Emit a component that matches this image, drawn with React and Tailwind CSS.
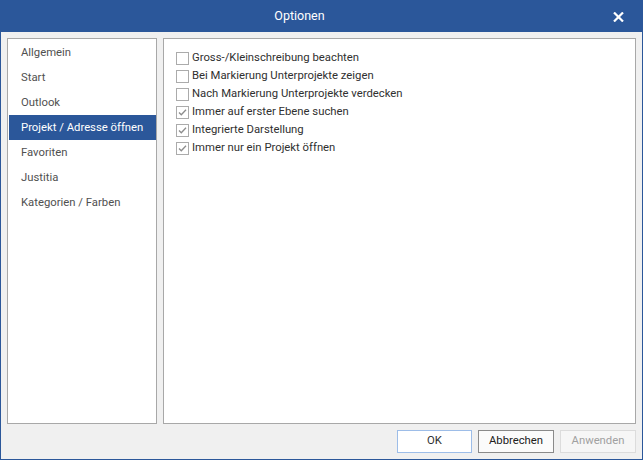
import React from "react";

const nav = [
  "Allgemein",
  "Start",
  "Outlook",
  "Projekt / Adresse öffnen",
  "Favoriten",
  "Justitia",
  "Kategorien / Farben",
];

const opts = [
  ["Gross-/Kleinschreibung beachten", false],
  ["Bei Markierung Unterprojekte zeigen", false],
  ["Nach Markierung Unterprojekte verdecken", false],
  ["Immer auf erster Ebene suchen", true],
  ["Integrierte Darstellung", true],
  ["Immer nur ein Projekt öffnen", true],
];

function Box({ checked }) {
  return (
    <div className="w-[13px] h-[13px] border border-[#ababab] bg-white flex items-center justify-center shrink-0">
      {checked && (
        <svg width="11" height="11" viewBox="0 0 11 11">
          <path d="M2 5.5 L4.3 7.8 L9 2.8" fill="none" stroke="#8c8c8c" strokeWidth="1.3" />
        </svg>
      )}
    </div>
  );
}

export default function App() {
  return (
    <div
      className="w-[643px] h-[460px] flex flex-col bg-[#f0f0f0] border-x border-b border-[#2b579a] text-[11.3px]"
      style={{ fontFamily: "Roboto, 'Liberation Sans', sans-serif" }}
    >
      <div className="h-[32px] -mx-px bg-[#2b579a] flex items-center shrink-0 relative">
        <div className="flex-1 flex justify-center pr-[44px] text-white text-[12.5px]">Optionen</div>
        <div className="absolute left-[613px] top-[12px]">
          <svg width="11" height="10" viewBox="0 0 11 10">
            <path d="M1 0.5 L10 9.5 M10 0.5 L1 9.5" stroke="white" strokeWidth="2.2" />
          </svg>
        </div>
      </div>
      <div className="flex gap-[6px] px-[6px] mt-[6px] h-[386px]">
        <div className="w-[150px] h-full bg-white border border-[#a8a8a8] pt-[1px] pl-[1px]">
          {nav.map((n, i) => (
            <div
              key={n}
              className={
                "h-[25px] flex items-center pl-[12px] pt-[2px] " +
                (i === 3 ? "bg-[#2b579a] text-white" : "text-[#505050]")
              }
            >
              {n}
            </div>
          ))}
        </div>
        <div className="flex-1 h-full bg-white border border-[#a8a8a8] pt-[10px] pl-[12px]">
          {opts.map(([t, c]) => (
            <div key={t} className="h-[18px] flex items-center gap-[3px] text-[#303030]">
              <Box checked={c} />
              <span className="pt-[1px]">{t}</span>
            </div>
          ))}
        </div>
      </div>
      <div className="flex justify-end gap-[6px] pr-[6px] mt-[6px]">
        <button className="w-[75px] h-[23px] bg-white border border-[#9dbde8] text-[#303030] text-[11.3px]">OK</button>
        <button className="w-[76px] h-[23px] bg-[#fbfbfb] border border-[#8a8a8a] text-[#202020] text-[11.3px]">Abbrechen</button>
        <button className="w-[76px] h-[23px] bg-[#f6f6f6] border border-[#dcdcdc] text-[#a0a0a0] text-[11.3px]">Anwenden</button>
      </div>
    </div>
  );
}
